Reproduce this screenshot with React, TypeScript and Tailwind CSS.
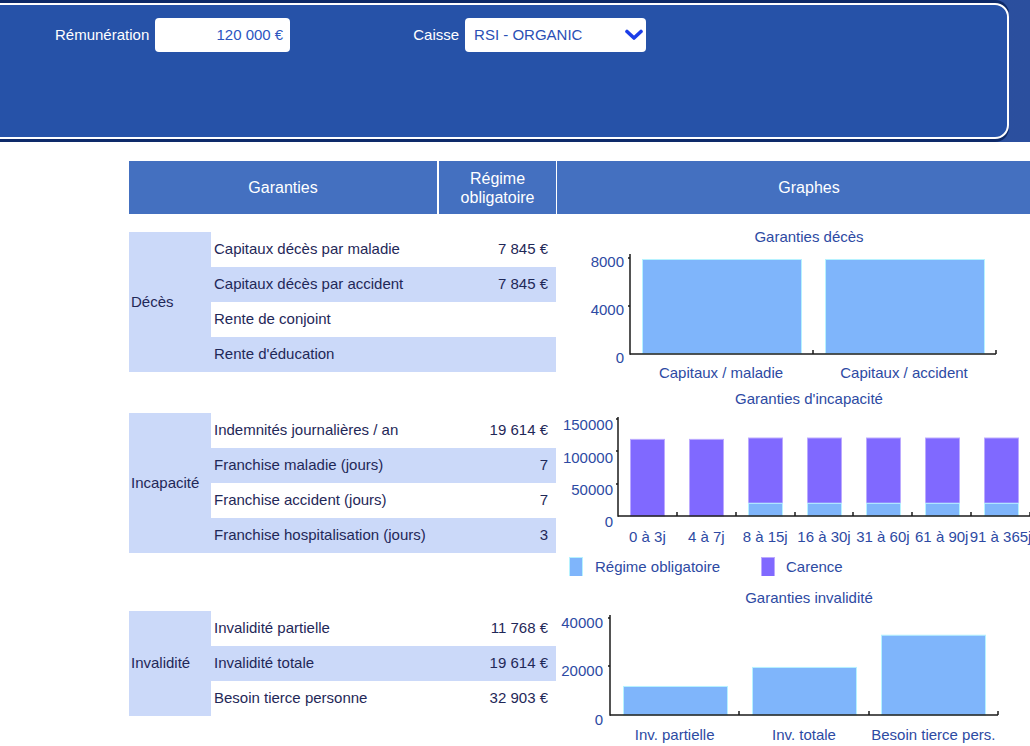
const font = "font-['Liberation_Sans',Arial,sans-serif]";
const svgFont = "'Liberation Sans', Arial, sans-serif";
const chartText = "#2d4aa3";
const barBlue = "#7fb5fb";
const barBlueEdge = "#b6f2ff";
const barPurple = "#8069ff";
const barPurpleEdge = "#bba9ff";

type Row = { label: string; value?: string };

const sections: { name: string; height: string; rows: Row[] }[] = [
  {
    name: "Décès",
    height: "h-[176px]",
    rows: [
      { label: "Capitaux décès par maladie", value: "7 845 €" },
      { label: "Capitaux décès par accident", value: "7 845 €" },
      { label: "Rente de conjoint" },
      { label: "Rente d'éducation" },
    ],
  },
  {
    name: "Incapacité",
    height: "h-[186px]",
    rows: [
      { label: "Indemnités journalières / an", value: "19 614 €" },
      { label: "Franchise maladie (jours)", value: "7" },
      { label: "Franchise accident (jours)", value: "7" },
      { label: "Franchise hospitalisation (jours)", value: "3" },
    ],
  },
  {
    name: "Invalidité",
    height: "h-[175px]",
    rows: [
      { label: "Invalidité partielle", value: "11 768 €" },
      { label: "Invalidité totale", value: "19 614 €" },
      { label: "Besoin tierce personne", value: "32 903 €" },
    ],
  },
];

function Label({ x, y, children, anchor = "middle" }: { x: number; y: number; children: string; anchor?: "start" | "middle" | "end" }) {
  return (
    <text x={x} y={y} textAnchor={anchor} fontSize={15} fill={chartText} fontFamily={svgFont}>
      {children}
    </text>
  );
}

function Axes({ x0, x1, top, base, ticks, yTicks }: { x0: number; x1: number; top: number; base: number; ticks: number[]; yTicks: number[] }) {
  return (
    <g stroke="#1a1a1a" strokeWidth={1.5}>
      <line x1={x0} y1={top} x2={x0} y2={base + 0.75} />
      <line x1={x0} y1={base} x2={x1} y2={base} />
      {ticks.map((t) => (
        <line key={t} x1={t} y1={base - 4} x2={t} y2={base} />
      ))}
      {yTicks.map((t) => (
        <line key={t} x1={x0 - 2} y1={t} x2={x0} y2={t} />
      ))}
    </g>
  );
}

function DecesChart() {
  return (
    <svg width={504} height={176} className="block">
      <Label x={252} y={28}>Garanties décès</Label>
      <rect x={85.5} y={45.5} width={159} height={94} fill={barBlue} stroke={barBlueEdge} />
      <rect x={268.5} y={45.5} width={159} height={94} fill={barBlue} stroke={barBlueEdge} />
      <Axes x0={73} x1={439} top={40} base={140} ticks={[256, 439]} yTicks={[44, 92]} />
      <Label x={67} y={53} anchor="end">8000</Label>
      <Label x={67} y={101} anchor="end">4000</Label>
      <Label x={67} y={149} anchor="end">0</Label>
      <Label x={164} y={164}>Capitaux / maladie</Label>
      <Label x={347} y={164}>Capitaux / accident</Label>
    </svg>
  );
}

const incapBars = [
  { cat: "0 à 3j", blue: 0, total: 118500 },
  { cat: "4 à 7j", blue: 0, total: 118500 },
  { cat: "8 à 15j", blue: 19614, total: 120600 },
  { cat: "16 à 30j", blue: 19614, total: 120600 },
  { cat: "31 à 60j", blue: 19614, total: 120600 },
  { cat: "61 à 90j", blue: 19614, total: 120600 },
  { cat: "91 à 365j", blue: 19614, total: 120600 },
];

function IncapChart() {
  const x0 = 61;
  const base = 126;
  const cw = 58.86;
  const scale = 97 / 150000;
  return (
    <svg width={504} height={186} className="block">
      <Label x={252} y={14}>Garanties d'incapacité</Label>
      {incapBars.map((b, i) => {
        const cx = x0 + cw * (i + 0.5);
        const left = Math.round(cx - 17) + 0.5;
        const topTotal = base - b.total * scale;
        const topBlue = base - b.blue * scale;
        return (
          <g key={b.cat}>
            <rect x={left} y={topTotal} width={34} height={topBlue - topTotal} fill={barPurple} stroke={barPurpleEdge} />
            {b.blue > 0 && <rect x={left} y={topBlue} width={34} height={base - topBlue} fill={barBlue} stroke={barBlueEdge} />}
            <Label x={cx} y={152}>{b.cat}</Label>
          </g>
        );
      })}
      <Axes
        x0={x0}
        x1={473}
        top={27}
        base={base}
        ticks={[1, 2, 3, 4, 5, 6, 7].map((k) => Math.round(x0 + cw * k))}
        yTicks={[29, 61, 94]}
      />
      <Label x={56} y={40} anchor="end">150000</Label>
      <Label x={56} y={73} anchor="end">100000</Label>
      <Label x={56} y={105} anchor="end">50000</Label>
      <Label x={56} y={137} anchor="end">0</Label>
      <rect x={12.5} y={167.5} width={13} height={20} fill={barBlue} stroke={barBlueEdge} />
      <Label x={38} y={182} anchor="start">Régime obligatoire</Label>
      <rect x={204.5} y={167.5} width={13} height={20} fill={barPurple} stroke={barPurpleEdge} />
      <Label x={229} y={182} anchor="start">Carence</Label>
    </svg>
  );
}

function InvalChart() {
  const x0 = 53;
  const base = 139;
  const cw = 129.33;
  const scale = 48.5 / 20000;
  const bars = [
    { cat: "Inv. partielle", v: 11768 },
    { cat: "Inv. totale", v: 19614 },
    { cat: "Besoin tierce pers.", v: 32903 },
  ];
  return (
    <svg width={504} height={175} className="block">
      <Label x={252} y={27}>Garanties invalidité</Label>
      {bars.map((b, i) => {
        const cx = x0 + cw * (i + 0.5);
        const top = base - b.v * scale;
        return (
          <g key={b.cat}>
            <rect x={Math.round(cx - 52) + 0.5} y={top} width={104} height={base - top} fill={barBlue} stroke={barBlueEdge} />
            <Label x={cx} y={164}>{b.cat}</Label>
          </g>
        );
      })}
      <Axes x0={x0} x1={441} top={39} base={base} ticks={[182, 312, 441]} yTicks={[42, 90]} />
      <Label x={46} y={52} anchor="end">40000</Label>
      <Label x={46} y={100} anchor="end">20000</Label>
      <Label x={46} y={149} anchor="end">0</Label>
    </svg>
  );
}

const charts = [DecesChart, IncapChart, InvalChart];

export default function App() {
  return (
    <div className={`w-full overflow-hidden bg-white ${font}`}>
      <div className="h-[142px] w-full bg-[linear-gradient(to_right,#2652a8,#2b4f9e)] pt-[3px]">
        <div className="-ml-4 h-[136px] w-[1025px] rounded-r-[14px] border-2 border-white bg-[#2652a8] pl-[69px] pt-[13px] shadow-[0_-3px_0_#0e2a69,0_3px_0_#0e2a69]">
          <div className="flex items-center text-[15px]">
            <span className="text-white">Rémunération</span>
            <div className="ml-[6px] flex h-[34px] w-[135px] items-center justify-end rounded-[4px] bg-white pr-[7px] text-[#2c55bf]">
              120 000 €
            </div>
            <span className="ml-[123px] text-white">Caisse</span>
            <div className="ml-[6px] flex h-[34px] w-[181px] items-center justify-between rounded-[4px] bg-white pl-[9px] pr-[3px] text-[#2a4fb5]">
              <span>RSI - ORGANIC</span>
              <svg width="18" height="12" viewBox="0 0 18 12">
                <polyline points="2,2.5 9,9 16,2.5" fill="none" stroke="#1b3de8" strokeWidth="3.6" strokeLinecap="round" strokeLinejoin="round" />
              </svg>
            </div>
          </div>
        </div>
      </div>

      <div className="ml-[129px] mt-[19px] w-[932px]">
        <div className="flex h-[53px] text-[16px] text-white">
          <div className="flex w-[308px] items-center justify-center bg-[#4470c0]">Garanties</div>
          <div className="ml-[2px] flex w-[117px] items-center justify-center bg-[#4470c0] text-center leading-[19px]">
            Régime
            <br />
            obligatoire
          </div>
          <div className="ml-px flex w-[504px] items-center justify-center bg-[#4470c0]">Graphes</div>
        </div>

        {sections.map((s, si) => {
          const Chart = charts[si];
          return (
            <div key={s.name} className={`flex ${s.height}`}>
              <div className="flex w-[427px] items-center">
                <div className="flex w-full text-[15px] text-[#1f2858]">
                  <div className="flex w-[82px] items-center bg-[#cbd9f9] pl-[2px]">{s.name}</div>
                  <div className="flex w-[345px] flex-col">
                    {s.rows.map((r, ri) => (
                      <div
                        key={r.label}
                        className={`flex h-[35px] items-center justify-between pl-[3px] pr-[8px] ${ri % 2 === 1 ? "bg-[#cbd9f9]" : "bg-white"}`}
                      >
                        <span>{r.label}</span>
                        <span>{r.value ?? ""}</span>
                      </div>
                    ))}
                  </div>
                </div>
              </div>
              <div className="ml-px w-[504px]">
                <Chart />
              </div>
            </div>
          );
        })}
      </div>
    </div>
  );
}
